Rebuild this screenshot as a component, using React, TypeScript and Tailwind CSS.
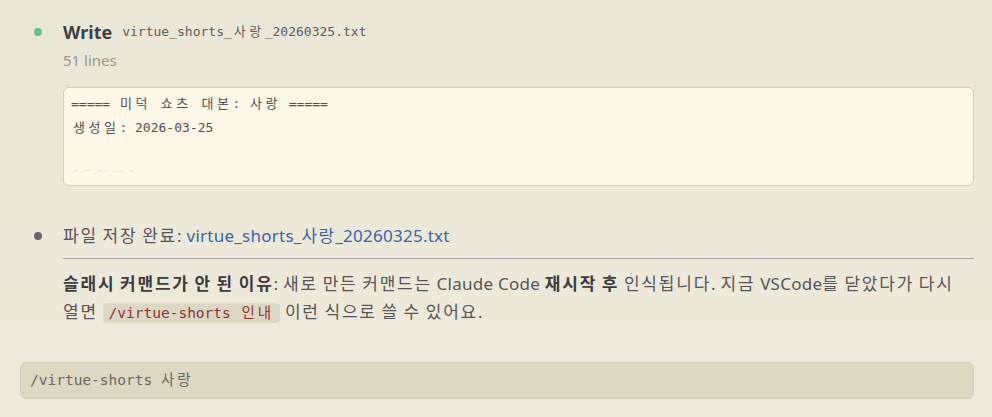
import React from 'react'

const MONO = "font-['Consolas','DejaVu_Sans_Mono','Noto_Sans_CJK_KR',monospace]"
const SANS = "font-['Segoe_UI','Noto_Sans','Noto_Sans_CJK_KR',sans-serif]"

// hangul runs get their own spacing so widths line up with the original fonts
function K({ text, k }: { text: string; k: string }) {
  const parts = text.split(/([가-힣]+)/)
  return (
    <>
      {parts.map((p, i) =>
        /[가-힣]/.test(p) ? (
          <span key={i} className={k}>{p}</span>
        ) : (
          <span key={i}>{p}</span>
        )
      )}
    </>
  )
}

const MK = 'tracking-[3.5px] pl-[2px]'
const SK = 'tracking-[1.8px]'

const fileLines = ['===== 미덕 쇼츠 대본: 사랑 =====', '생성일: 2026-03-25', '', '[도입부]']

export default function App() {
  return (
    <div className={`min-h-screen bg-gradient-to-b from-[#ebe7d6] to-[#eeeadb] pl-5 pr-[18px] pt-[18px] ${SANS}`}>
      {/* Write tool call */}
      <div className="flex">
        <div className="w-[43px] shrink-0 h-7 flex items-center">
          <div className="ml-[14px] w-2 h-2 rounded-full bg-[#6cc48c]" />
        </div>
        <div className="flex-1 min-w-0">
          <div className="h-7 flex items-center gap-[10px]">
            <span className="text-[18px] font-bold text-[#3f3f44]">Write</span>
            <span className={`${MONO} text-[13px] text-[#5c5c5c]`}>
              <K text="virtue_shorts_사랑_20260325.txt" k={MK} />
            </span>
          </div>
          <div className="mt-1 h-5 leading-5 text-[15px] text-[#9a978c]">51 lines</div>
          <div className="relative mt-[17px] h-[99px] rounded-md border border-[#d2ccb9] bg-[#fcf7e7] px-[7px] pt-1">
            <div className="relative h-[82px] overflow-hidden">
              {fileLines.map((l, i) => (
                <div key={i} className={`${MONO} h-6 leading-6 text-[13px] text-[#505050] whitespace-pre`}>
                  <K text={l} k={MK} />
                </div>
              ))}
              <div className="absolute inset-x-0 bottom-0 h-[14px] bg-gradient-to-b from-[#fcf7e7]/50 to-[#fcf7e7]" />
            </div>
          </div>
        </div>
      </div>

      {/* Assistant message */}
      <div className="flex mt-[36px]">
        <div className="w-[43px] shrink-0 h-7 flex items-center">
          <div className="ml-[14px] w-2 h-2 rounded-full bg-[#66656a]" />
        </div>
        <div className="flex-1 min-w-0 text-[17px] tracking-[0.25px] text-[#55545a]">
          <div className="h-7 leading-7">
            <K text="파일 저장 완료: " k={SK} />
            <span className="text-[#3566a8]">
              <K text="virtue_shorts_사랑_20260325.txt" k="tracking-[1.2px]" />
            </span>
          </div>
          <div className="mt-2 border-t border-[#a09fab]" />
          <p className="mt-[11px] leading-7">
            <b className="font-bold text-[#3c3c40]">
              <K text="슬래시 커맨드가 안 된 이유" k={SK} />
            </b>
            <K text=": 새로 만든 커맨드는 Claude Code " k={SK} />
            <b className="font-bold text-[#3c3c40]">
              <K text="재시작 후" k={SK} />
            </b>
            <K text=" 인식됩니다. 지금 VSCode를 닫았다가 다시" k={SK} />
            <br />
            <K text="열면 " k={SK} />
            <code className={`${MONO} text-[14.5px] tracking-normal text-[#8a3434] bg-[#dcd8c3] rounded px-[6px] py-[2px]`}>
              <K text="/virtue-shorts 인내" k="tracking-[3px] pl-[2px]" />
            </code>
            <K text=" 이런 식으로 쓸 수 있어요." k={SK} />
          </p>
        </div>
      </div>

      {/* Input */}
      <div className="mt-[35px] h-[37px] flex items-center rounded-md border border-[#d2cdb8] bg-[#dcd8c2] pl-[9px]">
        <span className={`${MONO} text-[14.5px] text-[#6a6862]`}>
          <K text="/virtue-shorts 사랑" k="tracking-[3px]" />
        </span>
      </div>
    </div>
  )
}
